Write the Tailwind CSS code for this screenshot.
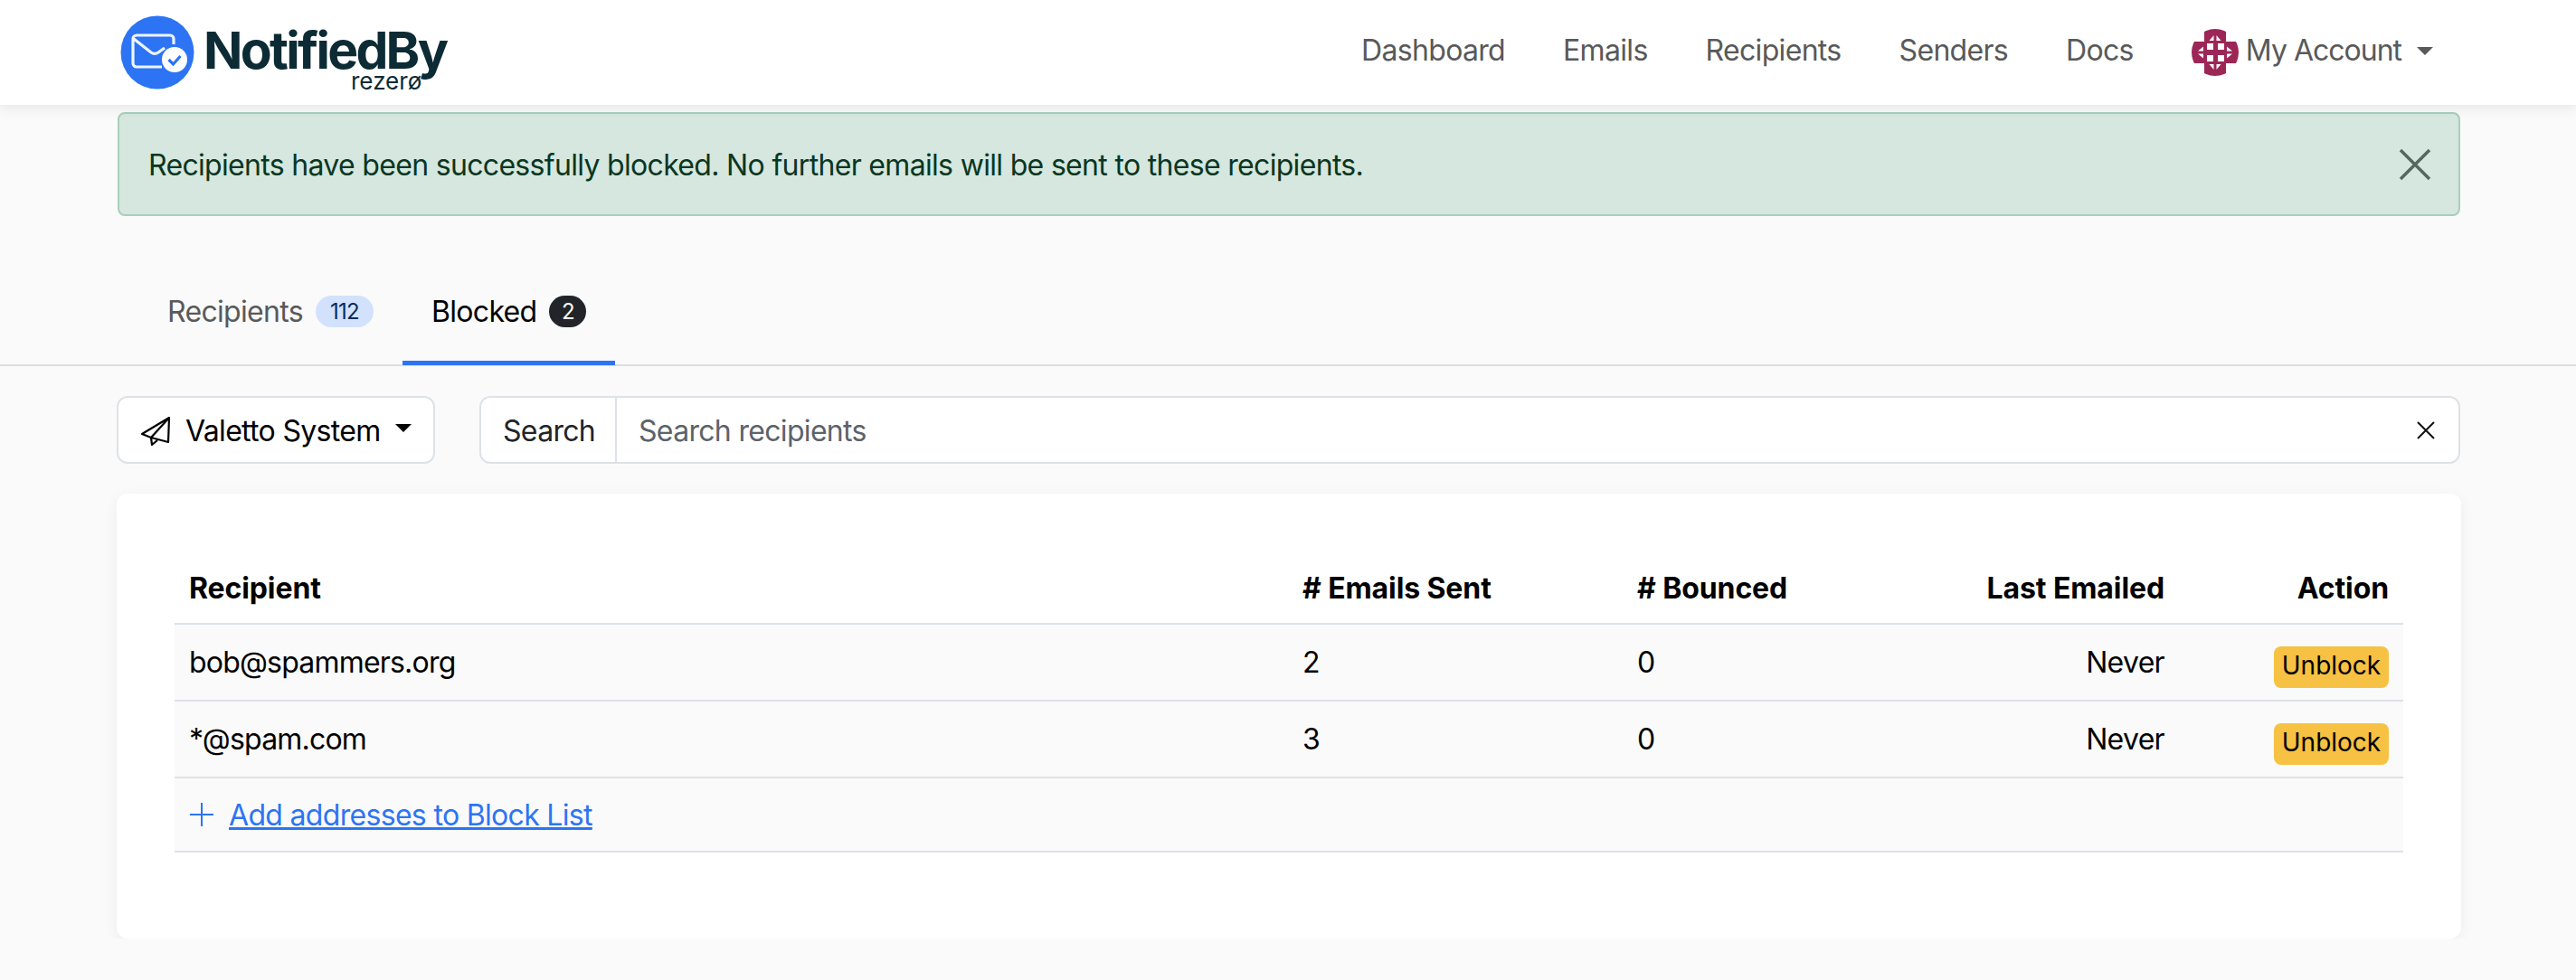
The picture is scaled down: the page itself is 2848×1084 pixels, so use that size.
<!DOCTYPE html>
<html lang="en">
<head>
    <meta charset="UTF-8">
    <title>Recipients - NotifiedBy</title>
    <script src="https://cdn.jsdelivr.net/npm/@tailwindcss/browser@4"></script>
</head>
<body class="bg-[#fafafa] text-black text-[32px] leading-[48px] tracking-[-0.68px] [font-family:Inter,sans-serif]">
    <!-- Navbar -->
    <header class="relative bg-white h-[116px] shadow-[0_4px_12px_rgba(0,0,0,0.08)]">
        <nav class="h-full pl-[133px] pr-[158px] flex justify-between items-center">
            <div class="flex items-center">
                <svg class="w-[82px] h-[82px] mt-[-1px]" viewBox="0 0 82 82">
                    <circle cx="41" cy="41" r="40.5" fill="#2d74f4"/>
                    <path d="M46 57H18a4 4 0 0 1-4-4V26a4 4 0 0 1 4-4h37a4 4 0 0 1 4 4v6M15 26l19 15a7 7 0 0 0 8 0l7-5" fill="none" stroke="#fff" stroke-width="3.200" stroke-opacity="0.92"/>
                    <circle cx="60" cy="49" r="14" fill="#fff"/>
                    <path d="M53.500 49l5 5 8-9" fill="none" stroke="#2d74f4" stroke-width="3.200"/>
                </svg>
                <div class="ml-[10px] mt-[20px] flex flex-col">
                    <span class="text-[#0d2b35] text-[57px] leading-[44px] font-bold tracking-[-2.700px] whitespace-nowrap">NotifiedBy</span>
                    <span class="ml-[163px] text-[#0d2b35] text-[26px] leading-[24px] tracking-normal">rezerø</span>
                </div>
            </div>
            <div class="flex items-center text-[#595959] mt-[-5px]">
                <a class="mr-[64px]">Dashboard</a>
                <a class="mr-[64px]">Emails</a>
                <a class="mr-[64px]">Recipients</a>
                <a class="mr-[64px]">Senders</a>
                <a class="mr-[64px]">Docs</a>
                <svg class="w-[52px] h-[52px] mr-[8px] mt-[5px]" viewBox="0 0 52 52">
                    <clipPath id="crest"><circle cx="26" cy="26" r="26"/></clipPath>
                    <g clip-path="url(#crest)">
                        <path d="M14 0h24v14h14v24H38v14H14V38H0V14h14z" fill="#9c2757"/>
                        <g fill="#fff">
                            <rect x="17" y="16" width="7" height="7"/><rect x="29" y="16" width="7" height="7"/>
                            <rect x="17" y="29" width="7" height="7"/><rect x="29" y="29" width="7" height="7"/>
                            <path d="M24.500 7v6h-5zM27.500 7v6h5zM24.500 45v-6h-5zM27.500 45v-6h5z"/>
                            <path d="M7 24.500h6v-5zM7 27.500h6v5zM45 24.500h-6v-5zM45 27.500h-6v5z"/>
                        </g>
                    </g>
                </svg>
                <a class="tracking-[-1px]">My Account</a>
                <span class="ml-[17px] mt-[2px] w-0 h-0 border-x-[9px] border-x-transparent border-t-[9px] border-t-[#595959]"></span>
            </div>
        </nav>
    </header>

    <main class="pt-2">
        <!-- Alert -->
        <div class="ml-[130px] mr-[128px] h-[115px] px-[32px] flex items-center justify-between rounded-[8px] border-2 border-[#a8cfbb] bg-[#d5e7de] text-[#0a3622]">
            <p class="pt-[2px]">Recipients have been successfully blocked. No further emails will be sent to these recipients.</p>
            <svg class="w-[36px] h-[36px] mr-[-2px]" viewBox="0 0 36 36" fill="none" stroke="#55685f" stroke-width="3.500">
                <path d="M2 2l32 32M34 2L2 34"/>
            </svg>
        </div>

        <!-- Tabs -->
        <div class="mt-[47px] h-[119px] pl-[153px] flex items-end border-b-2 border-[#dcdde0]">
            <a class="h-[119px] mb-[-1px] px-[32px] flex items-center gap-[14px] text-[#595959]">
                Recipients
                <span class="w-[64px] h-[35px] rounded-full bg-[#d2e2fc] text-[#0e2a5c] text-[24px] leading-[35px] text-center">112</span>
            </a>
            <a class="h-[119px] mb-[-1px] px-[32px] flex items-center gap-[14px] border-b-[5px] border-[#2d74f4] pt-[5px]">
                Blocked
                <span class="w-[41px] h-[35px] rounded-full bg-[#212529] text-white text-[24px] leading-[35px] text-center">2</span>
            </a>
        </div>

        <!-- Toolbar -->
        <div class="ml-[129px] mr-[128px] mt-[33px] h-[75px] flex gap-[49px]">
            <button class="w-[352px] h-full pl-[24px] pt-[2px] flex items-center bg-white border-2 border-[#dee2e6] rounded-[12px]">
                <svg class="w-[34px] h-[34px] mr-[16px]" viewBox="0 0 34 34" fill="none" stroke="#000" stroke-width="2.200" stroke-linejoin="round">
                    <path d="M32 2L2 20l10 4 19 5zM32 2L12 24l1 8 6-5"/>
                </svg>
                Valetto System
                <span class="ml-[16px] mb-[6px] w-0 h-0 border-x-[9px] border-x-transparent border-t-[9px] border-t-black"></span>
            </button>
            <div class="flex-1 flex items-center bg-white border-2 border-[#dee2e6] rounded-[12px]">
                <span class="w-[150px] h-full pl-[24px] pt-[2px] flex items-center border-r-2 border-[#dee2e6] text-[#212529]">Search</span>
                <input class="flex-1 h-full pl-[24px] pt-[2px] outline-none placeholder:text-[#5c636a]" placeholder="Search recipients">
                <svg class="w-[20px] h-[20px] mr-[26px]" viewBox="0 0 20 20" fill="none" stroke="#111" stroke-width="2">
                    <path d="M1 1l18 18M19 1L1 19"/>
                </svg>
            </div>
        </div>

        <!-- Table card -->
        <div class="ml-[129px] mr-[127px] mt-[33px] pt-[64px] px-[64px] pb-[95px] bg-white rounded-[12px] shadow-[0_4px_16px_rgba(0,0,0,0.06)]">
            <table class="w-full table-fixed border-collapse">
                <colgroup>
                    <col class="w-[1231px]"><col class="w-[370px]"><col class="w-[386px]"><col class="w-[229px]"><col>
                </colgroup>
                <thead class="tracking-[-0.1px]">
                    <tr class="h-[80px] border-b-2 border-[#dee2e6] font-bold">
                        <th class="px-4 pt-[2px] text-left font-bold">Recipient</th>
                        <th class="px-4 pt-[2px] text-left font-bold"># Emails Sent</th>
                        <th class="px-4 pt-[2px] text-left font-bold"># Bounced</th>
                        <th class="px-4 pt-[2px] text-right font-bold whitespace-nowrap">Last Emailed</th>
                        <th class="px-4 pt-[2px] text-right font-bold">Action</th>
                    </tr>
                </thead>
                <tbody class="bg-[#fafafa]">
                    <tr class="border-b-2 border-[#dee2e6]">
                        <td class="px-4 pt-[18px] pb-[17px] align-top tracking-[-0.8px]">bob@spammers.org</td>
                        <td class="px-4 pt-[18px] pb-[17px] align-top">2</td>
                        <td class="px-4 pt-[18px] pb-[17px] align-top">0</td>
                        <td class="px-4 pt-[18px] pb-[17px] align-top text-right">Never</td>
                        <td class="px-4 pt-5 align-top text-right">
                            <button class="w-[127px] h-[46px] pb-[3px] rounded-[8px] bg-[#f7c143] text-[28px] leading-[43px] tracking-normal">Unblock</button>
                        </td>
                    </tr>
                    <tr class="border-b-2 border-[#dee2e6]">
                        <td class="px-4 pt-[18px] pb-[17px] align-top tracking-[-0.8px]">*@spam.com</td>
                        <td class="px-4 pt-[18px] pb-[17px] align-top">3</td>
                        <td class="px-4 pt-[18px] pb-[17px] align-top">0</td>
                        <td class="px-4 pt-[18px] pb-[17px] align-top text-right">Never</td>
                        <td class="px-4 pt-5 align-top text-right">
                            <button class="w-[127px] h-[46px] pb-[3px] rounded-[8px] bg-[#f7c143] text-[28px] leading-[43px] tracking-normal">Unblock</button>
                        </td>
                    </tr>
                    <tr class="border-b-2 border-[#dee2e6]">
                        <td colspan="5" class="px-4 pt-[17px] pb-[15px]">
                            <div class="flex items-center text-[#2d74f4]">
                                <svg class="w-[26px] h-[26px] ml-px mr-[17px] mt-[-2px]" viewBox="0 0 26 26" fill="none" stroke="#2d74f4" stroke-width="2"><path d="M13 0v26M0 13h26"/></svg>
                                <a class="underline">Add addresses to Block List</a>
                            </div>
                        </td>
                    </tr>
                </tbody>
            </table>
        </div>
    </main>
</body>
</html>
